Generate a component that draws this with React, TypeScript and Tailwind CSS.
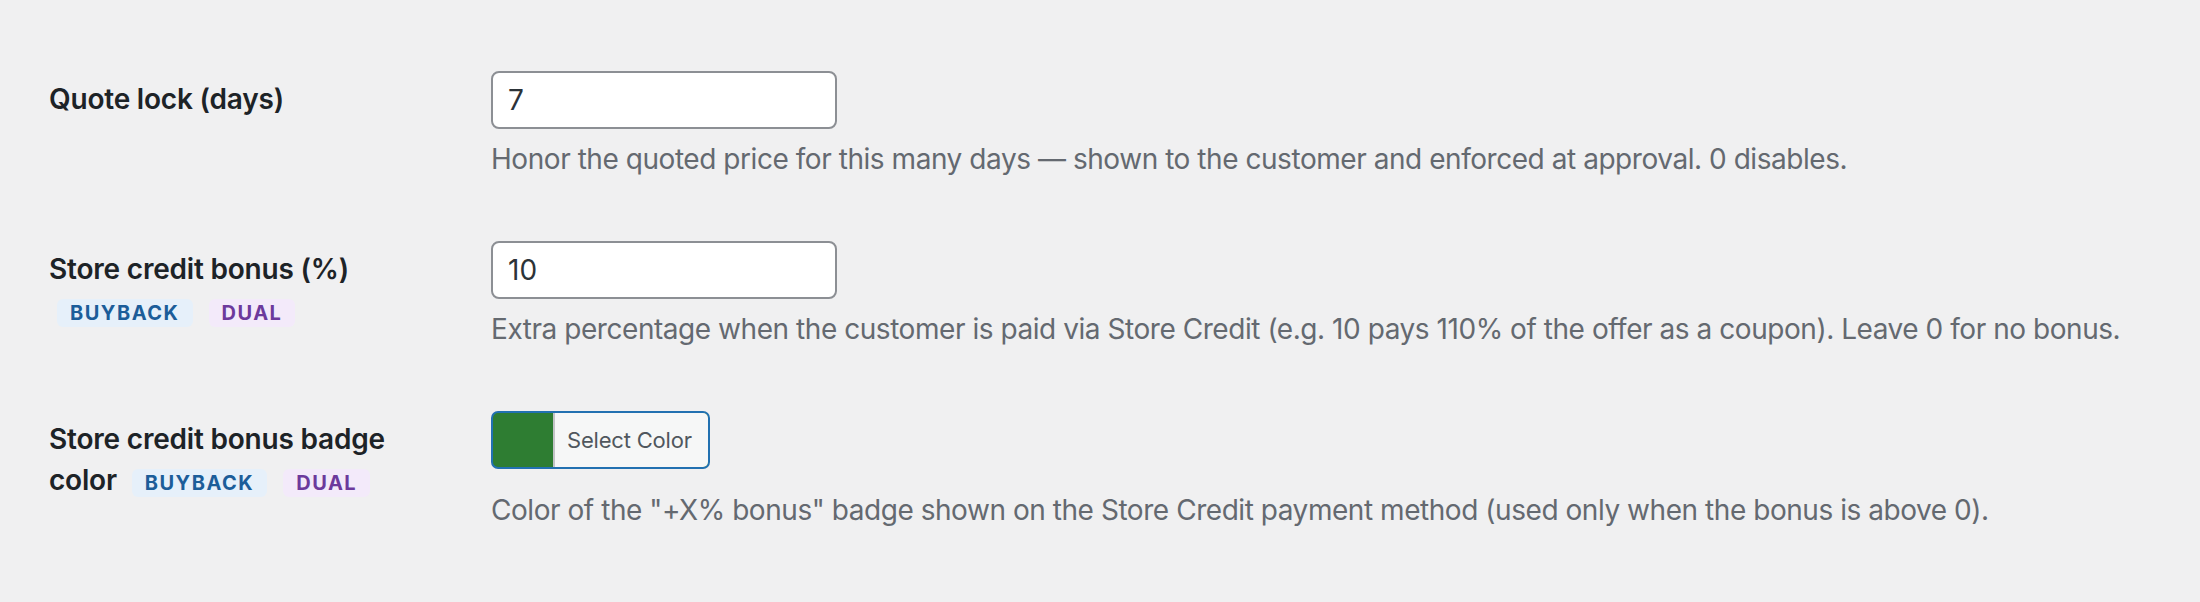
import type { ReactNode } from "react";

const BADGE_BASE =
  "inline-block rounded-[6px] px-[13px] py-[4px] text-[20px] leading-[20px] font-bold tracking-[1.5px]";

function Buyback() {
  return <span className={`${BADGE_BASE} ml-[8px] bg-[#e6f0fa] text-[#1c5d99]`}>BUYBACK</span>;
}

function Dual() {
  return <span className={`${BADGE_BASE} ml-[16px] bg-[#f3eafa] text-[#6c3a9c]`}>DUAL</span>;
}

interface RowProps {
  label: ReactNode;
  field: ReactNode;
  description: string;
  descGap?: string;
}

function SettingRow({ label, field, description, descGap = "mt-[12px]" }: RowProps) {
  return (
    <div className="flex h-[170px]">
      <div className="w-[442px] shrink-0 pt-[38px]">
        <div className="w-[380px] text-[28px] leading-[41px] font-semibold tracking-[-0.2px] text-[#1d2327]">
          {label}
        </div>
      </div>
      <div className="pt-[30px]">
        {field}
        <p className={`${descGap} text-[28px] leading-[36px] tracking-[-0.45px] text-[#646970]`}>
          {description}
        </p>
      </div>
    </div>
  );
}

function TextInput({ value }: { value: string }) {
  return (
    <input
      type="text"
      readOnly
      defaultValue={value}
      className="block h-[58px] w-[346px] rounded-[8px] border-2 border-[#8c8f94] bg-white px-[15px] text-[28px] text-[#2c3338] outline-none"
    />
  );
}

function ColorButton() {
  return (
    <div className="flex h-[58px] w-[219px] overflow-hidden rounded-[7px] border-2 border-[#2271b1] bg-[#2e7d32]">
      <div className="w-[60px] shrink-0" />
      <div className="flex flex-1 items-center border-l-2 border-[#c3c4c7] bg-[#f6f7f7] pl-[12px] text-[22px] tracking-[-0.2px] text-[#50575e]">
        Select Color
      </div>
    </div>
  );
}

export default function App() {
  return (
    <div className="min-h-[602px] w-full bg-[#f0f0f1] pl-[49px] pt-[41px] font-['Inter',sans-serif]">
      <SettingRow
        label={<>Quote lock (days)</>}
        field={<TextInput value="7" />}
        description="Honor the quoted price for this many days — shown to the customer and enforced at approval. 0 disables."
      />
      <SettingRow
        label={
          <>
            Store credit bonus (%)
            <span> </span>
            <Buyback />
            <Dual />
          </>
        }
        field={<TextInput value="10" />}
        description="Extra percentage when the customer is paid via Store Credit (e.g. 10 pays 110% of the offer as a coupon). Leave 0 for no bonus."
      />
      <SettingRow
        label={
          <>
            Store credit bonus badge color
            <span> </span>
            <Buyback />
            <Dual />
          </>
        }
        field={<ColorButton />}
        descGap="mt-[23px]"
        description={'Color of the "+X% bonus" badge shown on the Store Credit payment method (used only when the bonus is above 0).'}
      />
    </div>
  );
}
